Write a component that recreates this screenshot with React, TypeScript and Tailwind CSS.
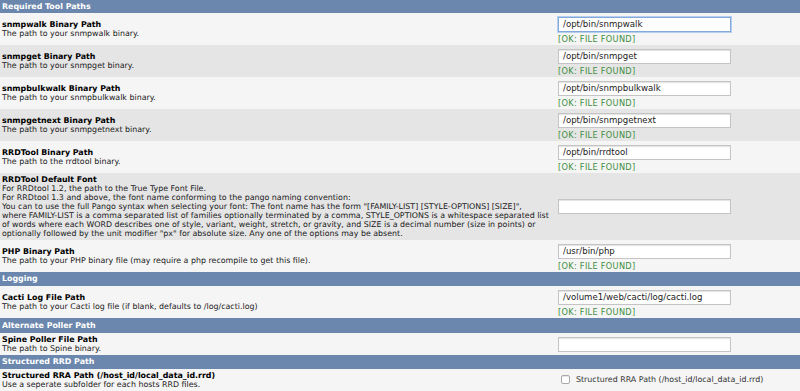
import React from "react";

type PathRow = {
  title: string;
  desc: string;
  value: string;
  focused?: boolean;
};

const FONT = { fontFamily: '"DejaVu Sans", Verdana, sans-serif' };

const toolRows: PathRow[] = [
  { title: "snmpwalk Binary Path", desc: "The path to your snmpwalk binary.", value: "/opt/bin/snmpwalk", focused: true },
  { title: "snmpget Binary Path", desc: "The path to your snmpget binary.", value: "/opt/bin/snmpget" },
  { title: "snmpbulkwalk Binary Path", desc: "The path to your snmpbulkwalk binary.", value: "/opt/bin/snmpbulkwalk" },
  { title: "snmpgetnext Binary Path", desc: "The path to your snmpgetnext binary.", value: "/opt/bin/snmpgetnext" },
  { title: "RRDTool Binary Path", desc: "The path to the rrdtool binary.", value: "/opt/bin/rrdtool" },
];

const fontLines = [
  "For RRDtool 1.2, the path to the True Type Font File.",
  "For RRDtool 1.3 and above, the font name conforming to the pango naming convention:",
  'You can to use the full Pango syntax when selecting your font: The font name has the form "[FAMILY-LIST] [STYLE-OPTIONS] [SIZE]",',
  "where FAMILY-LIST is a comma separated list of families optionally terminated by a comma, STYLE_OPTIONS is a whitespace separated list",
  "of words where each WORD describes one of style, variant, weight, stretch, or gravity, and SIZE is a decimal number (size in points) or",
  'optionally followed by the unit modifier "px" for absolute size. Any one of the options may be absent.',
];

function Header({ label, h }: { label: string; h: string }) {
  return (
    <div className={`bg-[#6b87ad] ${h} flex items-center px-[2px]`}>
      <span className="text-white font-bold text-[7.9px] leading-none">{label}</span>
    </div>
  );
}

function TextInput({ value, focused }: { value: string; focused?: boolean }) {
  return (
    <div
      className={`w-[173px] h-[15px] bg-white flex items-center pl-[4px] text-[8.6px] text-[#222] border ${
        focused
          ? "border-[#82a9d8] shadow-[0_0_0_1px_#b7cfee]"
          : "border-[#c4c4c4] shadow-[inset_0_1px_1px_rgba(0,0,0,0.12)]"
      }`}
    >
      {value}
    </div>
  );
}

function Label({ title, desc }: { title: string; desc: string }) {
  return (
    <div className="w-[558px] shrink-0 px-[2px] py-[2px] leading-[9px] text-[7.9px]">
      <div className="font-bold text-black">{title}</div>
      <div className="text-[#1a1a1a]">{desc}</div>
    </div>
  );
}

function FileRow({ row, dark }: { row: PathRow; dark: boolean }) {
  return (
    <div className={`flex items-center ${dark ? "bg-[#e5e5e5]" : "bg-[#f5f5f5]"}`}>
      <Label title={row.title} desc={row.desc} />
      <div className="flex flex-col pt-[4px] pb-[1px]">
        <TextInput value={row.value} focused={row.focused} />
        <div className="mt-[3px] text-[8.2px] leading-[9px] text-[#3f8f3f] tracking-[0.3px]">
          [OK: FILE FOUND]
        </div>
      </div>
    </div>
  );
}

export default function App() {
  return (
    <div className="w-[800px] h-[391px] overflow-hidden bg-white" style={FONT}>
      <Header label="Required Tool Paths" h="h-[13px]" />
      {toolRows.map((row, i) => (
        <FileRow key={row.title} row={row} dark={i % 2 === 1} />
      ))}

      <div className="flex items-center bg-[#e5e5e5]">
        <div className="w-[558px] shrink-0 px-[2px] py-[2px] leading-[9px] text-[7.9px] whitespace-nowrap">
          <div className="font-bold text-black">RRDTool Default Font</div>
          {fontLines.map((line) => (
            <div key={line} className="text-[#1a1a1a]">
              {line}
            </div>
          ))}
        </div>
        <TextInput value="" />
      </div>

      <FileRow
        row={{
          title: "PHP Binary Path",
          desc: "The path to your PHP binary file (may require a php recompile to get this file).",
          value: "/usr/bin/php",
        }}
        dark={false}
      />

      <Header label="Logging" h="h-[14px]" />
      <FileRow
        row={{
          title: "Cacti Log File Path",
          desc: "The path to your Cacti log file (if blank, defaults to /log/cacti.log)",
          value: "/volume1/web/cacti/log/cacti.log",
        }}
        dark={false}
      />

      <Header label="Alternate Poller Path" h="h-[15px]" />
      <div className="flex items-center bg-[#f5f5f5] h-[22px]">
        <Label title="Spine Poller File Path" desc="The path to Spine binary." />
        <TextInput value="" />
      </div>

      <Header label="Structured RRD Path" h="h-[14px]" />
      <div className="flex items-center bg-[#f5f5f5] h-[22px]">
        <Label
          title="Structured RRA Path (/host_id/local_data_id.rrd)"
          desc="Use a seperate subfolder for each hosts RRD files."
        />
        <div className="flex items-center gap-[6px] pl-[3px]">
          <span className="w-[9px] h-[9px] rounded-[2px] border border-[#a9a9a9] bg-white shadow-[inset_0_1px_1px_rgba(0,0,0,0.1)]" />
          <span className="text-[7.9px] text-[#333]">
            Structured RRA Path (/host_id/local_data_id.rrd)
          </span>
        </div>
      </div>
    </div>
  );
}
